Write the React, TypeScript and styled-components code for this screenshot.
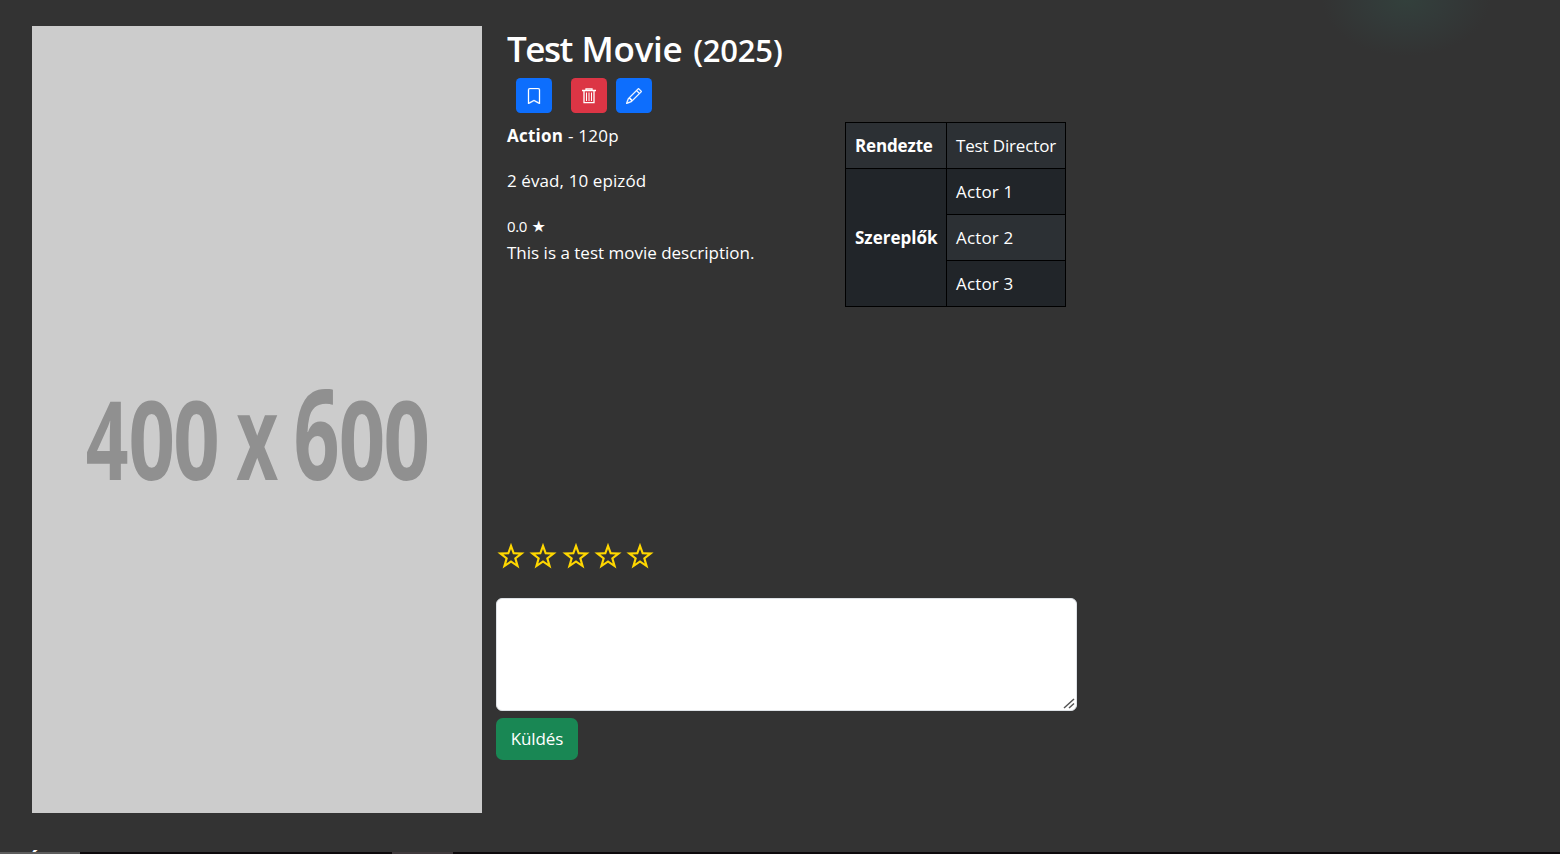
import React from "react";
import styled, { createGlobalStyle } from "styled-components";
import { BsBookmark, BsPencil } from "react-icons/bs";

const GlobalStyle = createGlobalStyle`
  *, *::before, *::after { box-sizing: border-box; }
  html, body { margin: 0; padding: 0; background: #333; }
  body {
    font-family: "Open Sans", "Noto Sans", sans-serif;
    font-size: 17px;
    line-height: 27px;
    color: #fff;
    overflow: hidden;
  }
`;

const Page = styled.div`
  height: 854px;
  overflow: hidden;
  display: flex;
  flex-direction: column;
  background: radial-gradient(ellipse 84px 56px at 1406px 0, #33403c 0%, #333a39 45%, #333 100%) #333;
`;

const Movie = styled.main`
  display: flex;
  gap: 14px;
  padding: 26px 32px 0;
`;

const Poster = styled.svg`
  flex: none;
  display: block;
  width: 450px;
  height: 787px;
  background: #ccc;
`;

const Content = styled.div`
  width: 581px;
  display: flex;
  flex-direction: column;
`;

const Summary = styled.section`
  height: 513px;
  padding-left: 11px;
`;

const Title = styled.h1`
  margin: 0;
  height: 52px;
  font-size: 35px;
  font-weight: 600;
  line-height: 45px;
  letter-spacing: -0.3px;
  white-space: nowrap;
`;

const Tight = styled.span`
  letter-spacing: -1.5px;
  padding-right: 1px;
`;

const Year = styled.small`
  font-size: 31px;
  letter-spacing: -0.2px;
  margin-left: 2px;
`;

const Actions = styled.div`
  display: flex;
  padding-left: 9px;
  height: 44px;
`;

const IconButton = styled.button<{ $color: string; $gap?: number }>`
  display: flex;
  align-items: center;
  justify-content: center;
  width: 36px;
  height: 35px;
  margin: 0 ${(p) => p.$gap ?? 0}px 0 0;
  padding: 0;
  border: 0;
  border-radius: 4.5px;
  background: ${(p) => p.$color};
  color: #fff;
  font-size: 16px;

  svg { stroke: currentColor; stroke-width: 0.3px; }
`;

const TrashIcon = styled.svg`
  width: 16px;
  height: 16px;
  fill: none;
`;

const Details = styled.div`
  display: grid;
  grid-template-columns: 338px 221px;
`;

const Line = styled.p<{ $space?: number; $tracking?: number }>`
  margin: 0 0 ${(p) => p.$space ?? 0}px;
  letter-spacing: ${(p) => p.$tracking ?? 0}px;
  white-space: nowrap;
`;

const Score = styled.small`
  display: block;
  height: 27px;
  line-height: 28px;
  font-size: 15px;
  letter-spacing: -0.4px;
  word-spacing: 1px;
`;

const ScoreStar = styled.span`
  font-family: "DejaVu Sans", sans-serif;
  font-size: 16px;
  line-height: 1;
`;

const Credits = styled.table`
  width: 221px;
  table-layout: fixed;
  border-collapse: collapse;
`;

const Row = styled.tr<{ $light?: boolean }>`
  height: 46px;
  background: ${(p) => (p.$light ? "#2c3034" : "#212529")};
`;

const Label = styled.th<{ $tracking: number }>`
  width: 101px;
  padding: 9px 0 9px 9px;
  border: 1px solid #000;
  text-align: left;
  font-weight: 700;
  letter-spacing: ${(p) => p.$tracking}px;
`;

const Value = styled.td<{ $tracking: number }>`
  padding: 9px 0 9px 9px;
  border: 1px solid #000;
  white-space: nowrap;
  letter-spacing: ${(p) => p.$tracking}px;
`;

const Review = styled.form`
  display: flex;
  flex-direction: column;
  align-items: flex-start;
`;

const Rating = styled.div`
  display: flex;
  gap: 4.3px;
  padding: 3px 0 0 1px;
  height: 59px;
`;

const Star = styled.svg`
  width: 28px;
  height: 28px;
  fill: #ffd700;
`;

const CommentBox = styled.div`
  position: relative;
  width: 581px;
  height: 113px;
  margin-bottom: 7px;
`;

const Comment = styled.textarea`
  display: block;
  width: 100%;
  height: 100%;
  background: #fff;
  border: 1px solid #dee2e6;
  border-radius: 6px;
  resize: none;
`;

const Grip = styled.svg`
  position: absolute;
  right: 2px;
  bottom: 2px;
  width: 12px;
  height: 11px;
  stroke: #555;
  stroke-width: 1.5px;
`;

const Submit = styled.button`
  width: 82px;
  height: 42px;
  padding: 0 0 2px;
  border: 0;
  border-radius: 6.75px;
  background: #198754;
  color: #fff;
  font: inherit;
  letter-spacing: -0.1px;
`;

const Reviews = styled.h2`
  flex: none;
  height: 39px;
  margin: 0;
  padding: 33px 0 0 25px;
  font-size: 26px;
  line-height: 36px;
  font-weight: 600;
  overflow: hidden;
`;

const BottomEdge = styled.div`
  flex: none;
  height: 2px;
  background: linear-gradient(
    90deg,
    #5c5c5c 0 80px,
    #0c090b 80px 392px,
    #403a3d 392px 453px,
    #0c090b 453px
  );
`;

function starPoints(radius: number, ratio: number) {
  return Array.from({ length: 10 }, (_, i) => {
    const r = i % 2 ? radius * ratio : radius;
    const a = (Math.PI / 5) * i - Math.PI / 2;
    return `${(14 + r * Math.cos(a)).toFixed(2)} ${(15 + r * Math.sin(a)).toFixed(2)}`;
  }).join("L");
}

const starPath = `M${starPoints(14.3, 0.41)}ZM${starPoints(8, 0.41)}Z`;

const actors = ["Actor 1", "Actor 2", "Actor 3"];

export default function App() {
  return (
    <>
      <GlobalStyle />
      <Page>
        <Movie>
          <Poster viewBox="0 0 450 787">
            <g fill="#909090" fontFamily="Open Sans, sans-serif" fontWeight="700" fontSize="110">
              <text transform="translate(0 454) scale(.68 1)" x="79">4</text>
              <text transform="translate(0 454) scale(.74 1)" x="130.5 191">00</text>
              <text transform="translate(0 454) scale(.61 1)" x="335" fontSize="119">x</text>
              <text transform="translate(0 454) scale(.64 1)" x="408.5" fontSize="126">6</text>
              <text transform="translate(0 454) scale(.74 1)" x="414.5 475">00</text>
            </g>
          </Poster>
          <Content>
            <Summary>
              <Title>
                <Tight>Test</Tight> Movie <Year>(2025)</Year>
              </Title>
              <Actions>
                <IconButton $color="#0d6efd" $gap={19}><BsBookmark /></IconButton>
                <IconButton $color="#dc3545" $gap={9}>
                  <TrashIcon viewBox="0 0 16 16">
                    <path
                      style={{ strokeWidth: 1.3 }}
                      d="M1 2.5h14M5 2.5V.8h6v1.7M3 3v11.6h10V3"
                    />
                    <path style={{ strokeWidth: 1 }} d="M5.5 4.5v8.5M8 4.5v8.5M10.5 4.5v8.5" />
                  </TrashIcon>
                </IconButton>
                <IconButton $color="#0d6efd"><BsPencil /></IconButton>
              </Actions>
              <Details>
                <div>
                  <Line $space={18} $tracking={0.25}><b>Action</b> - 120p</Line>
                  <Line $space={18} $tracking={0.1}>2 évad, 10 epizód</Line>
                  <Score>0.0 <ScoreStar>★</ScoreStar></Score>
                  <Line>This is a test movie description.</Line>
                </div>
                <Credits>
                  <tbody>
                    <Row $light>
                      <Label $tracking={-0.15}>Rendezte</Label>
                      <Value $tracking={-0.15}>Test Director</Value>
                    </Row>
                    {actors.map((actor, i) => (
                      <Row key={actor} $light={i % 2 === 1}>
                        {i === 0 && <Label rowSpan={3} $tracking={0}>Szereplők</Label>}
                        <Value $tracking={0.15}>{actor}</Value>
                      </Row>
                    ))}
                  </tbody>
                </Credits>
              </Details>
            </Summary>
            <Review onSubmit={(e) => e.preventDefault()}>
              <Rating>
                {[1, 2, 3, 4, 5].map((n) => (
                  <Star key={n} viewBox="0 0 28 28">
                    <path fillRule="evenodd" d={starPath} />
                  </Star>
                ))}
              </Rating>
              <CommentBox>
                <Comment />
                <Grip viewBox="0 0 12 11">
                  <path d="M1 10L11 1M6 10L11 5.5" />
                </Grip>
              </CommentBox>
              <Submit>Küldés</Submit>
            </Review>
          </Content>
        </Movie>
        <Reviews>É</Reviews>
        <BottomEdge />
      </Page>
    </>
  );
}
